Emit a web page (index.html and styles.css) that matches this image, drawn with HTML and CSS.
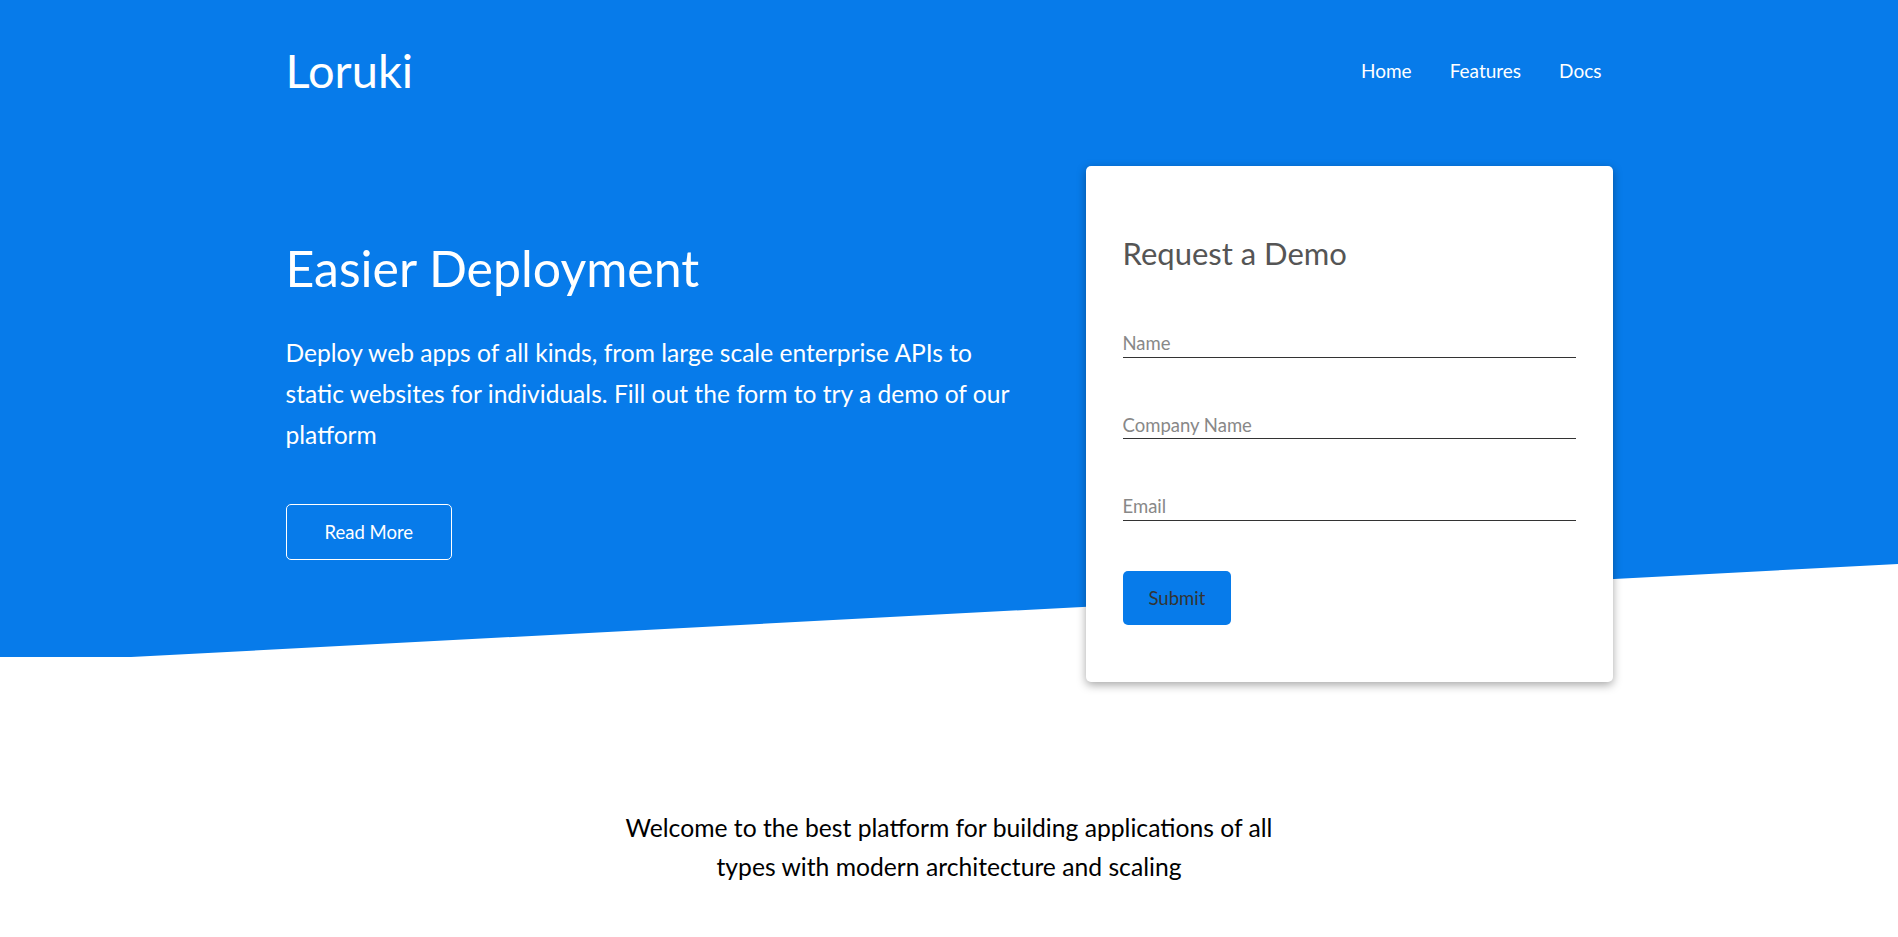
FILE: index.html
```html
<!DOCTYPE html>
<html lang="en">
<head>
<meta charset="utf-8">
<title>Loruki</title>
<link rel="stylesheet" href="styles.css">
</head>
<body>
<header class="hero">
  <nav class="navbar container">
    <h1 class="logo">Loruki</h1>
    <ul class="nav-links">
      <li><a href="#">Home</a></li>
      <li><a href="#">Features</a></li>
      <li><a href="#">Docs</a></li>
    </ul>
  </nav>
  <section class="showcase container">
    <div class="showcase-text">
      <h2 class="showcase-title">Easier Deployment</h2>
      <p class="showcase-lead">Deploy web apps of all kinds, from large scale enterprise APIs to static websites for individuals. Fill out the form to try a demo of our platform</p>
      <a href="#" class="btn-outline">Read More</a>
    </div>
    <div class="showcase-form card">
      <h2 class="form-title">Request a Demo</h2>
      <form class="demo-form">
        <div class="form-control"><input type="text" placeholder="Name"></div>
        <div class="form-control"><input type="text" placeholder="Company Name"></div>
        <div class="form-control"><input type="email" placeholder="Email"></div>
        <button type="button" class="btn-primary">Submit</button>
      </form>
    </div>
  </section>
</header>
<section class="stats">
  <p class="stats-heading">Welcome to the best platform for building applications of all types with modern architecture and scaling</p>
</section>
</body>
</html>
```
FILE: styles.css
```css
* { box-sizing: border-box; }

body {
  margin: 0;
  font-family: Lato, "Open Sans", "Liberation Sans", sans-serif;
  color: #000;
  background: #fff;
}

.container {
  width: 1327px;
  margin: 0 auto;
}

.hero {
  position: relative;
  color: #fff;
}

.hero::before {
  content: "";
  position: absolute;
  top: 0;
  left: 0;
  right: 0;
  height: 657px;
  background: #077bea;
  clip-path: polygon(0 0, 100% 0, 100% 564px, 131px 100%, 0 100%);
  z-index: 0;
}

.navbar {
  position: relative;
  z-index: 1;
  height: 140px;
  display: flex;
  align-items: center;
  justify-content: space-between;
}

.logo {
  margin: 0;
  font-size: 47px;
  font-weight: 400;
  line-height: 1.2;
}

.nav-links {
  list-style: none;
  margin: 2px 11px 0 0;
  padding: 0;
  display: flex;
  gap: 38px;
}

.nav-links a {
  color: #fff;
  text-decoration: none;
  font-size: 19px;
  line-height: 1.2;
}

.showcase {
  position: relative;
  z-index: 1;
  margin-top: 26px;
  display: grid;
  grid-template-columns: 1fr 527px;
  gap: 50px;
  align-items: start;
}

.showcase-text {
  padding-top: 72px;
}

.showcase-title {
  margin: 0;
  font-size: 50px;
  font-weight: 400;
  line-height: 1.2;
}

.showcase-lead {
  margin: 35px 0 49px;
  font-size: 24.6px;
  line-height: 40.8px;
}

.btn-outline {
  display: inline-block;
  color: #fff;
  text-decoration: none;
  border: 1px solid #fff;
  border-radius: 5px;
  font-size: 18.5px;
  line-height: 22px;
  padding: 16px 38px;
}

.card {
  background: #fff;
  border-radius: 5px;
  box-shadow: 0 3px 10px rgba(0, 0, 0, 0.35);
  padding: 40px 37px 57px;
}

.form-title {
  margin: 29px 0 0;
  color: #555;
  font-size: 31px;
  font-weight: 400;
  line-height: 1.2;
}

.demo-form {
  margin-top: 61px;
}

.form-control {
  margin-bottom: 57px;
}

.form-control:first-child {
  margin-top: 4px;
}

.form-control input {
  display: block;
  width: 100%;
  border: 0;
  border-bottom: 1px solid #333;
  padding: 0 0 2px;
  font-family: inherit;
  font-size: 18.5px;
  line-height: 21.6px;
  color: #333;
  outline: none;
  background: transparent;
}

.form-control input::placeholder {
  color: #888;
}

.form-control:last-of-type {
  margin-bottom: 50px;
}

.btn-primary {
  display: block;
  background: #077bea;
  color: #333;
  border: 0;
  border-radius: 5px;
  font-family: inherit;
  font-size: 18.5px;
  line-height: 22px;
  padding: 16px 26px 16px;
  cursor: pointer;
}

.stats {
  padding-top: 127px;
}

.stats-heading {
  margin: 0 auto;
  max-width: 680px;
  text-align: center;
  font-size: 24.7px;
  line-height: 38.7px;
}
```
